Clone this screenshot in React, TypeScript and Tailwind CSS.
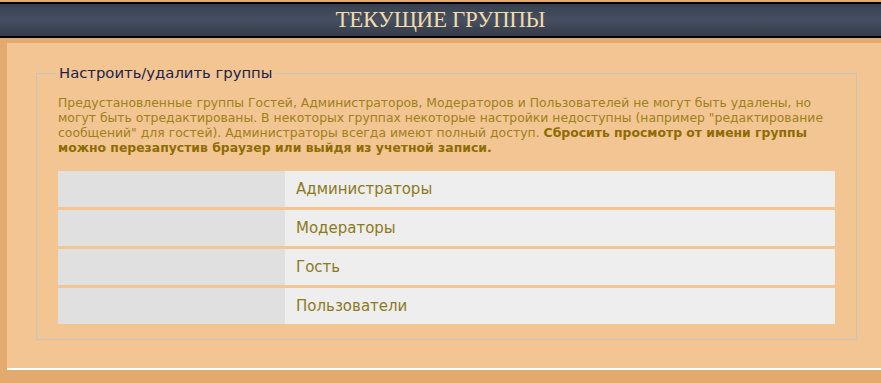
const groups = ["Администраторы", "Модераторы", "Гость", "Пользователи"];

export default function App() {
  return (
    <div className="w-[881px] h-[383px] overflow-hidden bg-[#e2aa6f] pt-[2px] font-['DejaVu_Sans',Verdana,sans-serif]">
      <header className="h-[36px] border-y-2 border-black bg-gradient-to-b from-[#38404f] via-[#465062] to-[#343b49] flex items-center justify-center">
        <h1 className="font-['Liberation_Serif',serif] text-[23px] text-[#f1dba8] tracking-[-0.3px] leading-none pb-[1px]">
          ТЕКУЩИЕ ГРУППЫ
        </h1>
      </header>
      <main className="ml-[7px] mt-[5px] bg-[#f2c592] pl-[29px] pr-[24px] pt-[20px] pb-[28px] border-b-2 border-white">
        <fieldset className="border border-[#c4c4c0] px-[21px] pb-[15px]">
          <legend className="ml-[-2px] px-[3px] text-[14.8px] text-[#20224a] leading-[20px]">
            Настроить/удалить группы
          </legend>
          <p className="mt-[12px] mb-[16px] text-[12.4px] leading-[15px] text-[#a0801a]">
            Предустановленные группы Гостей, Администраторов, Модераторов и Пользователей не могут быть удалены, но могут быть отредактированы. В некоторых группах некоторые настройки недоступны (например "редактирование сообщений" для гостей). Администраторы всегда имеют полный доступ.{" "}
            <b className="text-[#8d6c02]">
              Сбросить просмотр от имени группы можно перезапустив браузер или выйдя из учетной записи.
            </b>
          </p>
          <div className="flex flex-col gap-[3px]">
            {groups.map((g) => (
              <div key={g} className="flex h-[36px]">
                <div className="w-[227px] bg-[#dfe0df]" />
                <div className="flex-1 bg-[#eeeeee] flex items-center pl-[11px] text-[15px] text-[#8c7a1c]">
                  {g}
                </div>
              </div>
            ))}
          </div>
        </fieldset>
      </main>
    </div>
  );
}
